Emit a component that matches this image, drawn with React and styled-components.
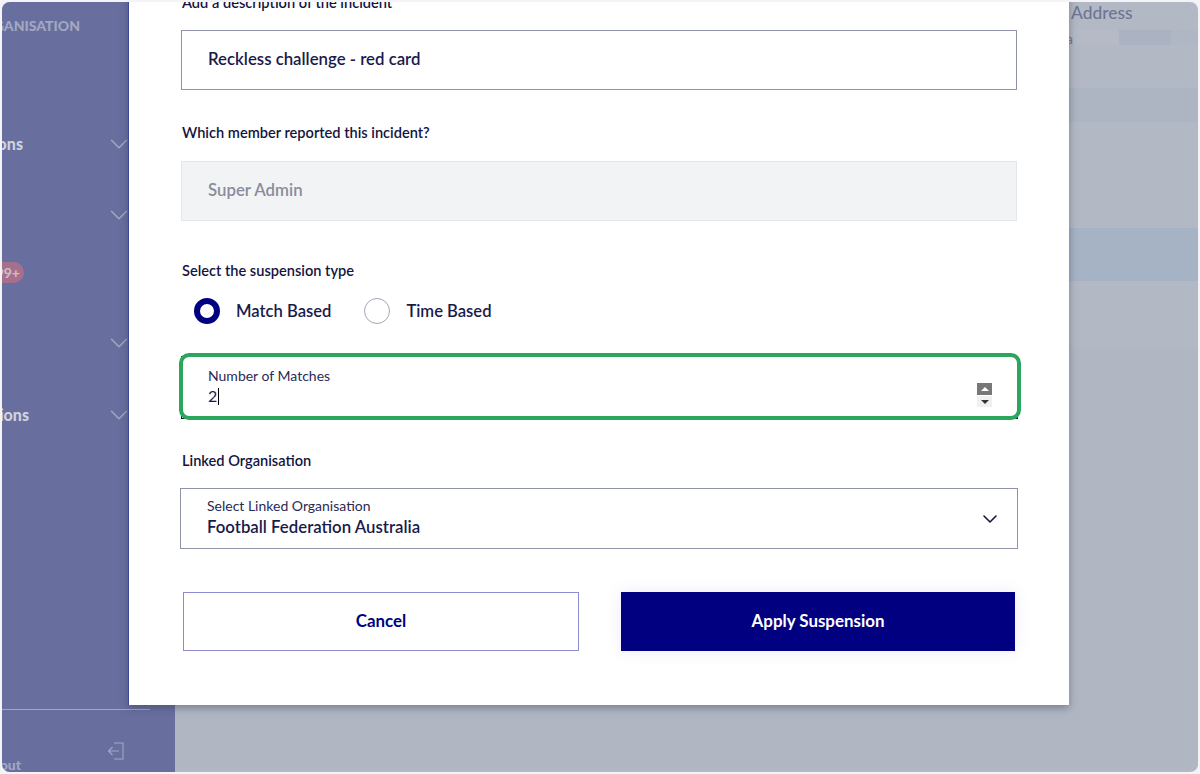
import React from 'react';
import styled, { createGlobalStyle } from 'styled-components';
import { ChevronDown } from 'lucide-react';

const GlobalStyle = createGlobalStyle`
	html, body {
		margin: 0;
		padding: 0;
		background: #f3f3f8;
		font-family: 'Lato', 'Liberation Sans', sans-serif;
	}
`;

const Frame = styled.div`
	position: relative;
	display: flex;
	width: 1196px;
	height: 770px;
	margin: 2px;
	border-radius: 8px;
	overflow: hidden;
	background: #b3b9c4;
`;

const Sidebar = styled.aside`
	display: flex;
	flex-direction: column;
	flex: 0 0 173px;
	background: #686f9f;
	color: #c9cbd8;
`;

const NavRow = styled.div`
	display: flex;
	align-items: center;
	justify-content: space-between;
	height: 24px;
	margin-top: ${(p) => p.$gap}px;
	padding-right: 41px;
`;

const NavLabel = styled.div`
	display: flex;
	justify-content: flex-end;
	width: ${(p) => p.$width}px;
	margin-bottom: ${(p) => (p.$small ? 0 : 2)}px;
	font-size: ${(p) => (p.$small ? 14 : 16)}px;
	font-weight: 900;
	white-space: nowrap;
	color: ${(p) => (p.$small ? '#a3a7c1' : '#cfd2de')};
`;

const Badge = styled.div`
	display: flex;
	align-items: center;
	justify-content: flex-end;
	width: 22px;
	height: 21px;
	padding-right: 4px;
	box-sizing: border-box;
	border-radius: 0 11px 11px 0;
	background: #a66f8c;
	color: #d3bdcb;
	font-size: 14px;
	font-weight: 700;
`;

const NavChevron = styled(ChevronDown)`
	color: #a3a7c1;
`;

const SidebarFooter = styled.div`
	margin-top: auto;
`;

const Divider = styled.div`
	width: 148px;
	height: 1px;
	background: #a3a7c1;
`;

const LogoutRow = styled.div`
	display: flex;
	align-items: flex-start;
	justify-content: space-between;
	height: 62px;
	padding-right: 50px;
`;

const LogoutLabel = styled.div`
	display: flex;
	justify-content: flex-end;
	width: 19px;
	margin-top: 46px;
	font-size: 14px;
	font-weight: 900;
	white-space: nowrap;
	color: #a3a7c1;
`;

const LogoutIcon = styled.svg`
	margin-top: 32px;
`;

const Main = styled.main`
	flex: 1;
	display: flex;
	flex-direction: column;
	min-width: 0;
`;

const AddressHead = styled.div`
	height: 23px;
	padding-left: 896px;
	font-size: 17.4px;
	line-height: 22px;
	font-weight: 500;
	color: #6e7594;
`;

const HeaderCells = styled.div`
	display: flex;
	height: 15px;
	margin-top: 5px;
	padding-left: 890px;
`;

const HeaderText = styled.div`
	display: flex;
	justify-content: flex-end;
	width: 8px;
	font-size: 14px;
	line-height: 17px;
	color: #6e7594;
`;

const HeaderCell = styled.div`
	width: ${(p) => p.$width}px;
	background: ${(p) => p.$color};
`;

const Band = styled.div`
	height: ${(p) => p.$height}px;
	background: ${(p) => p.$color};
`;

const Modal = styled.section`
	position: absolute;
	left: 126px;
	top: -14px;
	width: 941px;
	height: 717px;
	box-sizing: border-box;
	padding: 6px 52px 0;
	background: #fff;
	border-left: 1px solid #3f4a94;
	box-shadow: 0 3px 8px rgba(50, 55, 80, 0.45);
`;

const FieldLabel = styled.div`
	height: 18px;
	margin-top: ${(p) => p.$gap || 0}px;
	padding-left: 1px;
	font-size: 14.6px;
	line-height: 18px;
	font-weight: 600;
	color: #14143f;
`;

const TextBox = styled.div`
	display: flex;
	align-items: center;
	box-sizing: border-box;
	width: 836px;
	height: 60px;
	margin-top: ${(p) => p.$gap}px;
	padding: 0 0 4px 26px;
	font-size: 16.8px;
	font-weight: 600;
	color: ${(p) => (p.$disabled ? '#8a8c9c' : '#1a1a4b')};
	background: ${(p) => (p.$disabled ? '#f2f3f5' : '#fff')};
	border: 1px solid ${(p) => (p.$disabled ? '#e5e6ea' : '#8f93a8')};
`;

const RadioGroup = styled.div`
	display: flex;
	align-items: center;
	height: 26px;
	margin-top: 18px;
	padding-left: 13px;
`;

const RadioDot = styled.span`
	box-sizing: border-box;
	width: 26px;
	height: 26px;
	border-radius: 50%;
	border: ${(p) => (p.$on ? '6px solid #000080' : '1px solid #a5a6b5')};
	background: #fff;
`;

const RadioText = styled.span`
	margin: 0 33px 0 16px;
	font-size: 16.6px;
	font-weight: 600;
	color: #1a1a4b;
`;

const NumberBox = styled.div`
	position: relative;
	display: flex;
	align-items: center;
	justify-content: space-between;
	box-sizing: border-box;
	width: 837px;
	height: 63px;
	margin-top: 32px;
	padding: 0 25px 0 26px;
	border: 1px solid #14143f;
`;

const Highlight = styled.div`
	position: absolute;
	inset: -4px -4px -2px -3px;
	border: 4px solid #2aa65f;
	border-radius: 10px;
`;

const FieldText = styled.div`
	margin-bottom: ${(p) => p.$lift}px;
`;

const SmallLabel = styled.div`
	font-size: 14px;
	line-height: 17px;
	color: #2a2a55;
`;

const NumberValue = styled.div`
	display: flex;
	margin-top: 2px;
	font-size: 16px;
	line-height: 19px;
	color: #1a1a4b;
`;

const Caret = styled.span`
	width: 1px;
	height: 17px;
	margin: 2px 0 0 1px;
	background: #000;
`;

const Spinner = styled.div`
	display: flex;
	flex-direction: column;
	gap: 1px;
	width: 15px;
	margin-top: 15px;
`;

const SpinButton = styled.div`
	display: flex;
	align-items: center;
	justify-content: center;
	height: ${(p) => (p.$up ? 12 : 11)}px;
	background: ${(p) => (p.$up ? '#777' : '#f0f0f0')};
`;

const Arrow = styled.span`
	width: 0;
	height: 0;
	border-left: 4px solid transparent;
	border-right: 4px solid transparent;
	border-bottom: ${(p) => (p.$up ? '4px solid #fff' : '0')};
	border-top: ${(p) => (p.$up ? '0' : '4px solid #333')};
`;

const SelectBox = styled.div`
	display: flex;
	align-items: center;
	justify-content: space-between;
	box-sizing: border-box;
	width: 838px;
	height: 61px;
	margin: 18px 0 0 -1px;
	padding: 0 15px 0 26px;
	border: 1px solid #8f93a8;
`;

const SelectValue = styled.div`
	margin-top: 3px;
	font-size: 16.8px;
	line-height: 20px;
	font-weight: 600;
	color: #1a1a4b;
`;

const Buttons = styled.div`
	display: flex;
	gap: 42px;
	margin: 43px 0 0 2px;
`;

const Button = styled.button`
	width: ${(p) => (p.$primary ? 394 : 396)}px;
	height: 59px;
	padding: 0 0 2px;
	font-family: inherit;
	font-size: 16.9px;
	font-weight: 700;
	border: 1px solid ${(p) => (p.$primary ? '#000080' : '#8d8dcd')};
	color: ${(p) => (p.$primary ? '#fff' : '#000080')};
	background: ${(p) => (p.$primary ? '#000080' : '#fff')};
	box-shadow: ${(p) => (p.$primary ? '0 0 14px rgba(90, 100, 190, 0.12)' : 'none')};
`;

export default function App() {
	return (
		<>
			<GlobalStyle />
			<Frame>
				<Sidebar>
					<NavRow $gap={11}>
						<NavLabel $width={78} $small>ORGANISATION</NavLabel>
					</NavRow>
					<NavRow $gap={95}>
						<NavLabel $width={21}>Competitions</NavLabel>
						<NavChevron size={30} strokeWidth={1.2} />
					</NavRow>
					<NavRow $gap={47}>
						<span />
						<NavChevron size={30} strokeWidth={1.2} />
					</NavRow>
					<NavRow $gap={33}>
						<Badge>99+</Badge>
					</NavRow>
					<NavRow $gap={47}>
						<span />
						<NavChevron size={30} strokeWidth={1.2} />
					</NavRow>
					<NavRow $gap={48}>
						<NavLabel $width={27}>Suspensions</NavLabel>
						<NavChevron size={30} strokeWidth={1.2} />
					</NavRow>
					<SidebarFooter>
						<Divider />
						<LogoutRow>
							<LogoutLabel>Logout</LogoutLabel>
							<LogoutIcon width="18" height="18" viewBox="0 0 18 18" fill="none" stroke="#a3a7c1" strokeWidth="1.1">
								<path d="M7 1h9v16H7" />
								<path d="M12 9H1.5M5.5 5l-4 4 4 4" />
							</LogoutIcon>
						</LogoutRow>
					</SidebarFooter>
				</Sidebar>
				<Main>
					<AddressHead>Address</AddressHead>
					<HeaderCells>
						<HeaderText>a</HeaderText>
						<HeaderCell $width={46} $color="#b6b9c6" />
						<HeaderCell $width={52} $color="#abb2c1" />
						<HeaderCell $width={27} $color="#afb7c4" />
					</HeaderCells>
					<Band $height={43} $color="#b3b9c4" />
					<Band $height={34} $color="#adb5c2" />
					<Band $height={106} $color="#b3b9c4" />
					<Band $height={53} $color="#a6b3c4" />
					<Band $height={68} $color="#b3b9c4" />
					<Band $height={421} $color="#b0b7c3" />
				</Main>
				<Modal>
					<FieldLabel>Add a description of the incident</FieldLabel>
					<TextBox $gap={18}>Reckless challenge - red card</TextBox>
					<FieldLabel $gap={34}>Which member reported this incident?</FieldLabel>
					<TextBox $gap={19} $disabled>Super Admin</TextBox>
					<FieldLabel $gap={41}>Select the suspension type</FieldLabel>
					<RadioGroup>
						<RadioDot $on />
						<RadioText>Match Based</RadioText>
						<RadioDot />
						<RadioText>Time Based</RadioText>
					</RadioGroup>
					<NumberBox>
						<FieldText $lift={4}>
							<SmallLabel>Number of Matches</SmallLabel>
							<NumberValue>2<Caret /></NumberValue>
						</FieldText>
						<Spinner>
							<SpinButton $up><Arrow $up /></SpinButton>
							<SpinButton><Arrow /></SpinButton>
						</Spinner>
						<Highlight />
					</NumberBox>
					<FieldLabel $gap={33}>Linked Organisation</FieldLabel>
					<SelectBox>
						<FieldText $lift={4}>
							<SmallLabel>Select Linked Organisation</SmallLabel>
							<SelectValue>Football Federation Australia</SelectValue>
						</FieldText>
						<ChevronDown size={24} strokeWidth={1.6} color="#14143f" />
					</SelectBox>
					<Buttons>
						<Button>Cancel</Button>
						<Button $primary>Apply Suspension</Button>
					</Buttons>
				</Modal>
			</Frame>
		</>
	);
}
